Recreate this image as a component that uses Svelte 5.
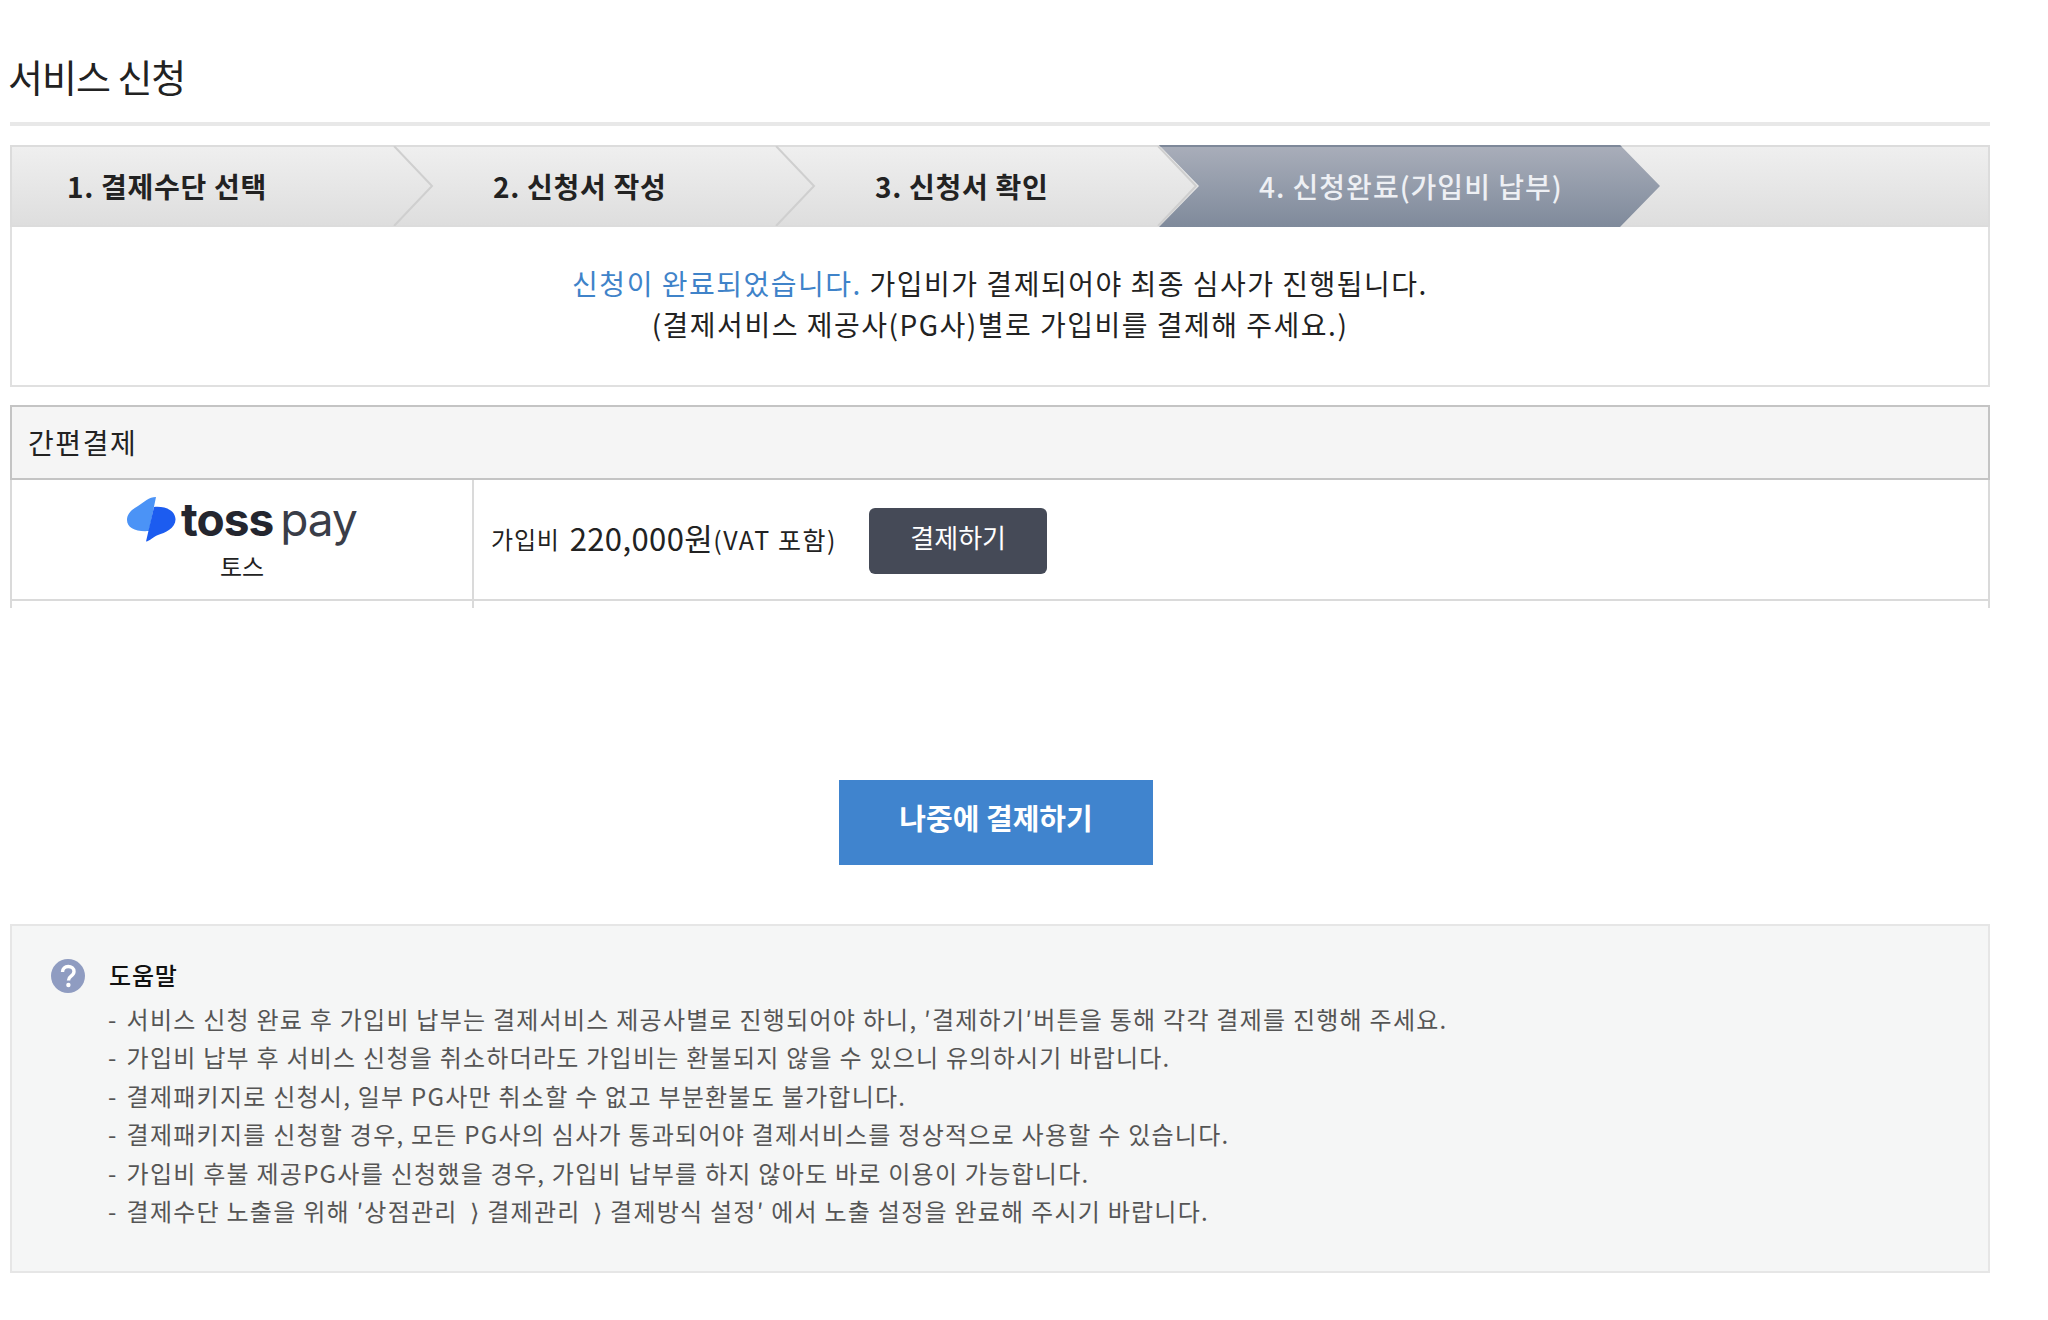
<script lang="ts">
  const steps = [
    { label: '1. 결제수단 선택' },
    { label: '2. 신청서 작성' },
    { label: '3. 신청서 확인' }
  ];

  const helpLines = [
    '서비스 신청 완료 후 가입비 납부는 결제서비스 제공사별로 진행되어야 하니, ′결제하기′버튼을 통해 각각 결제를 진행해 주세요.',
    '가입비 납부 후 서비스 신청을 취소하더라도 가입비는 환불되지 않을 수 있으니 유의하시기 바랍니다.',
    '결제패키지로 신청시, 일부 PG사만 취소할 수 없고 부분환불도 불가합니다.',
    '결제패키지를 신청할 경우, 모든 PG사의 심사가 통과되어야 결제서비스를 정상적으로 사용할 수 있습니다.',
    '가입비 후불 제공PG사를 신청했을 경우, 가입비 납부를 하지 않아도 바로 이용이 가능합니다.',
    '결제수단 노출을 위해 ′상점관리 \u2009⟩ 결제관리 \u2009⟩ 결제방식 설정′ 에서 노출 설정을 완료해 주시기 바랍니다.'
  ];
</script>

<div class="page">
  <h2 class="title">서비스 신청</h2>

  <div class="steps">
    {#each steps as step}
      <div class="step">
        <b>{step.label}</b>
        <svg class="chevron" width="42" height="80" viewBox="0 0 42 80">
          <polyline points="1,0 39,40 1,80" fill="none" stroke="#cfcfcf" stroke-width="2" />
        </svg>
      </div>
    {/each}
    <div class="step active"><b>4. 신청완료(가입비 납부)</b></div>
  </div>

  <div class="notice">
    <p><span class="blue">신청이 완료되었습니다.</span> 가입비가 결제되어야 최종 심사가 진행됩니다.</p>
    <p>(결제서비스 제공사(PG사)별로 가입비를 결제해 주세요.)</p>
  </div>

  <section class="pay">
    <h3>간편결제</h3>
    <div class="row">
      <div class="cell-logo">
        <div class="logo">
          <svg width="49" height="45" viewBox="0 0 49 45">
            <path d="M29 0 C22 0 17 5 11 9 C4 13 0 17 0 23 C0 31 9 35 22 34 Z" fill="#4b93f6" />
            <path d="M27 10 C38 9 48 13 48.5 22 C49 31 38 36 31 38 C26 40 23 44 19 44.5 Z" fill="#1c5cf0" />
          </svg>
          <span class="toss">toss</span><span class="paytext">pay</span>
        </div>
        <div class="logo-name">토스</div>
      </div>
      <div class="cell-price">
        <span class="fee">가입비</span>
        <span class="amount">220,000원</span>
        <span class="vat">(VAT 포함)</span>
        <button class="pay-btn">결제하기</button>
      </div>
    </div>
    <div class="row-cut"><i></i></div>
  </section>

  <div class="later">
    <button class="later-btn">나중에 결제하기</button>
  </div>

  <div class="help">
    <div class="help-head">
      <svg width="36" height="36" viewBox="0 0 36 36">
        <circle cx="18" cy="18" r="17" fill="#8f9cc1" />
        <path d="M12.5 14 C12.5 10.5 15 8.5 18.2 8.5 C21.5 8.5 24 10.5 24 13.5 C24 16 22.5 17.2 20.8 18.4 C19.2 19.5 18.5 20.4 18.5 22.5" fill="none" stroke="#fff" stroke-width="3.4" />
        <circle cx="18.4" cy="27" r="2.2" fill="#fff" />
      </svg>
      <strong>도움말</strong>
    </div>
    <ul>
      {#each helpLines as line}
        <li>{line}</li>
      {/each}
    </ul>
  </div>
</div>

<style>
  :global(body) {
    background: #fff;
  }

  .page {
    width: 1980px;
    padding: 0 58px 48px 10px;
    font-family: 'Noto Sans CJK KR', 'Noto Sans', sans-serif;
    color: #222;
  }

  .title {
    margin: 0 0 23px;
    height: 122px;
    padding-top: 50px;
    box-sizing: border-box;
    font-size: 38px;
    line-height: 52px;
    font-weight: 400;
    letter-spacing: -1px;
    text-indent: -2px;
    box-shadow: 0 4px 0 #e8e8e8;
  }

  .steps {
    display: flex;
    height: 82px;
    box-sizing: border-box;
    border: 2px solid #dcdcdc;
    background: linear-gradient(#efefef, #dedede);
  }

  .step {
    position: relative;
    width: 382px;
    display: flex;
    align-items: center;
    padding-left: 98px;
    box-sizing: border-box;
    font-size: 28px;
    letter-spacing: 0.7px;
    color: #222;
  }

  .step:first-child {
    width: 383px;
    padding-left: 55px;
  }

  .step b {
    font-weight: 700;
  }

  .chevron {
    position: absolute;
    right: -40px;
    top: -1px;
  }

  .step.active {
    width: 501px;
    padding-left: 100px;
    margin-top: -2px;
    margin-bottom: -2px;
    letter-spacing: 1px;
    color: #eef0f4;
    background: linear-gradient(#a9aeba, #7f8a9b);
    box-shadow: inset 0 2px 0 #7e8899;
    clip-path: polygon(0 0, 461px 0, 501px 50%, 461px 100%, 0 100%, 40px 50%);
  }

  .step.active b {
    font-weight: 500;
  }

  .notice {
    height: 160px;
    box-sizing: border-box;
    border: 2px solid #e0e0e0;
    border-top: 0;
    padding-top: 36px;
    text-align: center;
    font-size: 28px;
    letter-spacing: 1.5px;
    line-height: 41px;
  }

  .notice p {
    margin: 0;
  }

  .blue {
    color: #3f83c9;
  }

  .pay {
    margin-top: 18px;
  }

  .pay h3 {
    margin: 0;
    height: 75px;
    box-sizing: border-box;
    border: 2px solid #c4c4c4;
    background: #f5f5f5;
    padding-left: 16px;
    font-size: 28px;
    letter-spacing: 1.6px;
    line-height: 70px;
    font-weight: 400;
  }

  .row {
    display: grid;
    grid-template-columns: 462px 1fr;
    height: 121px;
    box-sizing: border-box;
    border-left: 2px solid #dadada;
    border-right: 2px solid #dadada;
    border-bottom: 2px solid #dadada;
  }

  .cell-logo {
    border-right: 2px solid #dadada;
    display: flex;
    flex-direction: column;
    align-items: center;
  }

  .logo {
    display: flex;
    align-items: center;
    margin-top: 17px;
    height: 45px;
    color: #24262f;
    line-height: 45px;
  }

  .toss {
    font-family: Inter, sans-serif;
    font-weight: 700;
    font-size: 46px;
    margin-left: 5px;
    letter-spacing: -1px;
  }

  .paytext {
    font-family: Inter, sans-serif;
    font-weight: 400;
    font-size: 46px;
    margin-left: 7px;
    color: #3a3d48;
    letter-spacing: -1px;
  }

  .logo-name {
    font-size: 24px;
    line-height: 30px;
    margin-top: 9px;
  }

  .cell-price {
    display: flex;
    align-items: center;
    padding-left: 17px;
    font-size: 24px;
  }

  .fee {
    letter-spacing: 0.8px;
    padding-bottom: 2px;
  }

  .amount {
    font-size: 31px;
    letter-spacing: 0.4px;
    margin-left: 10px;
    padding-bottom: 4px;
  }

  .vat {
    font-size: 25px;
    letter-spacing: 1.6px;
    padding-bottom: 2px;
  }

  .pay-btn {
    margin: 3px 0 0 32px;
    width: 178px;
    height: 66px;
    border: 0;
    border-radius: 6px;
    background: #454a57;
    color: #fff;
    font: inherit;
    font-size: 26px;
    padding-bottom: 10px;
  }

  .row-cut {
    height: 7px;
    border-left: 2px solid #dadada;
    border-right: 2px solid #dadada;
  }

  .row-cut i {
    display: block;
    width: 462px;
    height: 7px;
    box-sizing: border-box;
    border-right: 2px solid #dadada;
  }

  .later {
    margin-top: 172px;
    display: flex;
    justify-content: center;
    padding-right: 8px;
  }

  .later-btn {
    width: 314px;
    height: 85px;
    border: 0;
    background: #4084ce;
    color: #fff;
    font: inherit;
    font-size: 29px;
    font-weight: 700;
    padding-bottom: 12px;
  }

  .help {
    margin-top: 59px;
    height: 349px;
    box-sizing: border-box;
    border: 2px solid #e6e6e6;
    background: #f5f6f6;
    padding: 31px 0 0 38px;
  }

  .help-head {
    display: flex;
    align-items: center;
    gap: 23px;
    font-size: 24px;
    color: #111;
  }

  .help-head strong {
    font-weight: 500;
    letter-spacing: 0.8px;
    padding-bottom: 2px;
  }

  ul {
    list-style: none;
    margin: 5.5px 0 0 58px;
    padding: 0;
    font-size: 24px;
    line-height: 38.5px;
    letter-spacing: 1.25px;
    color: #555;
  }

  li::before {
    content: '-';
    margin-right: 9px;
  }
</style>
